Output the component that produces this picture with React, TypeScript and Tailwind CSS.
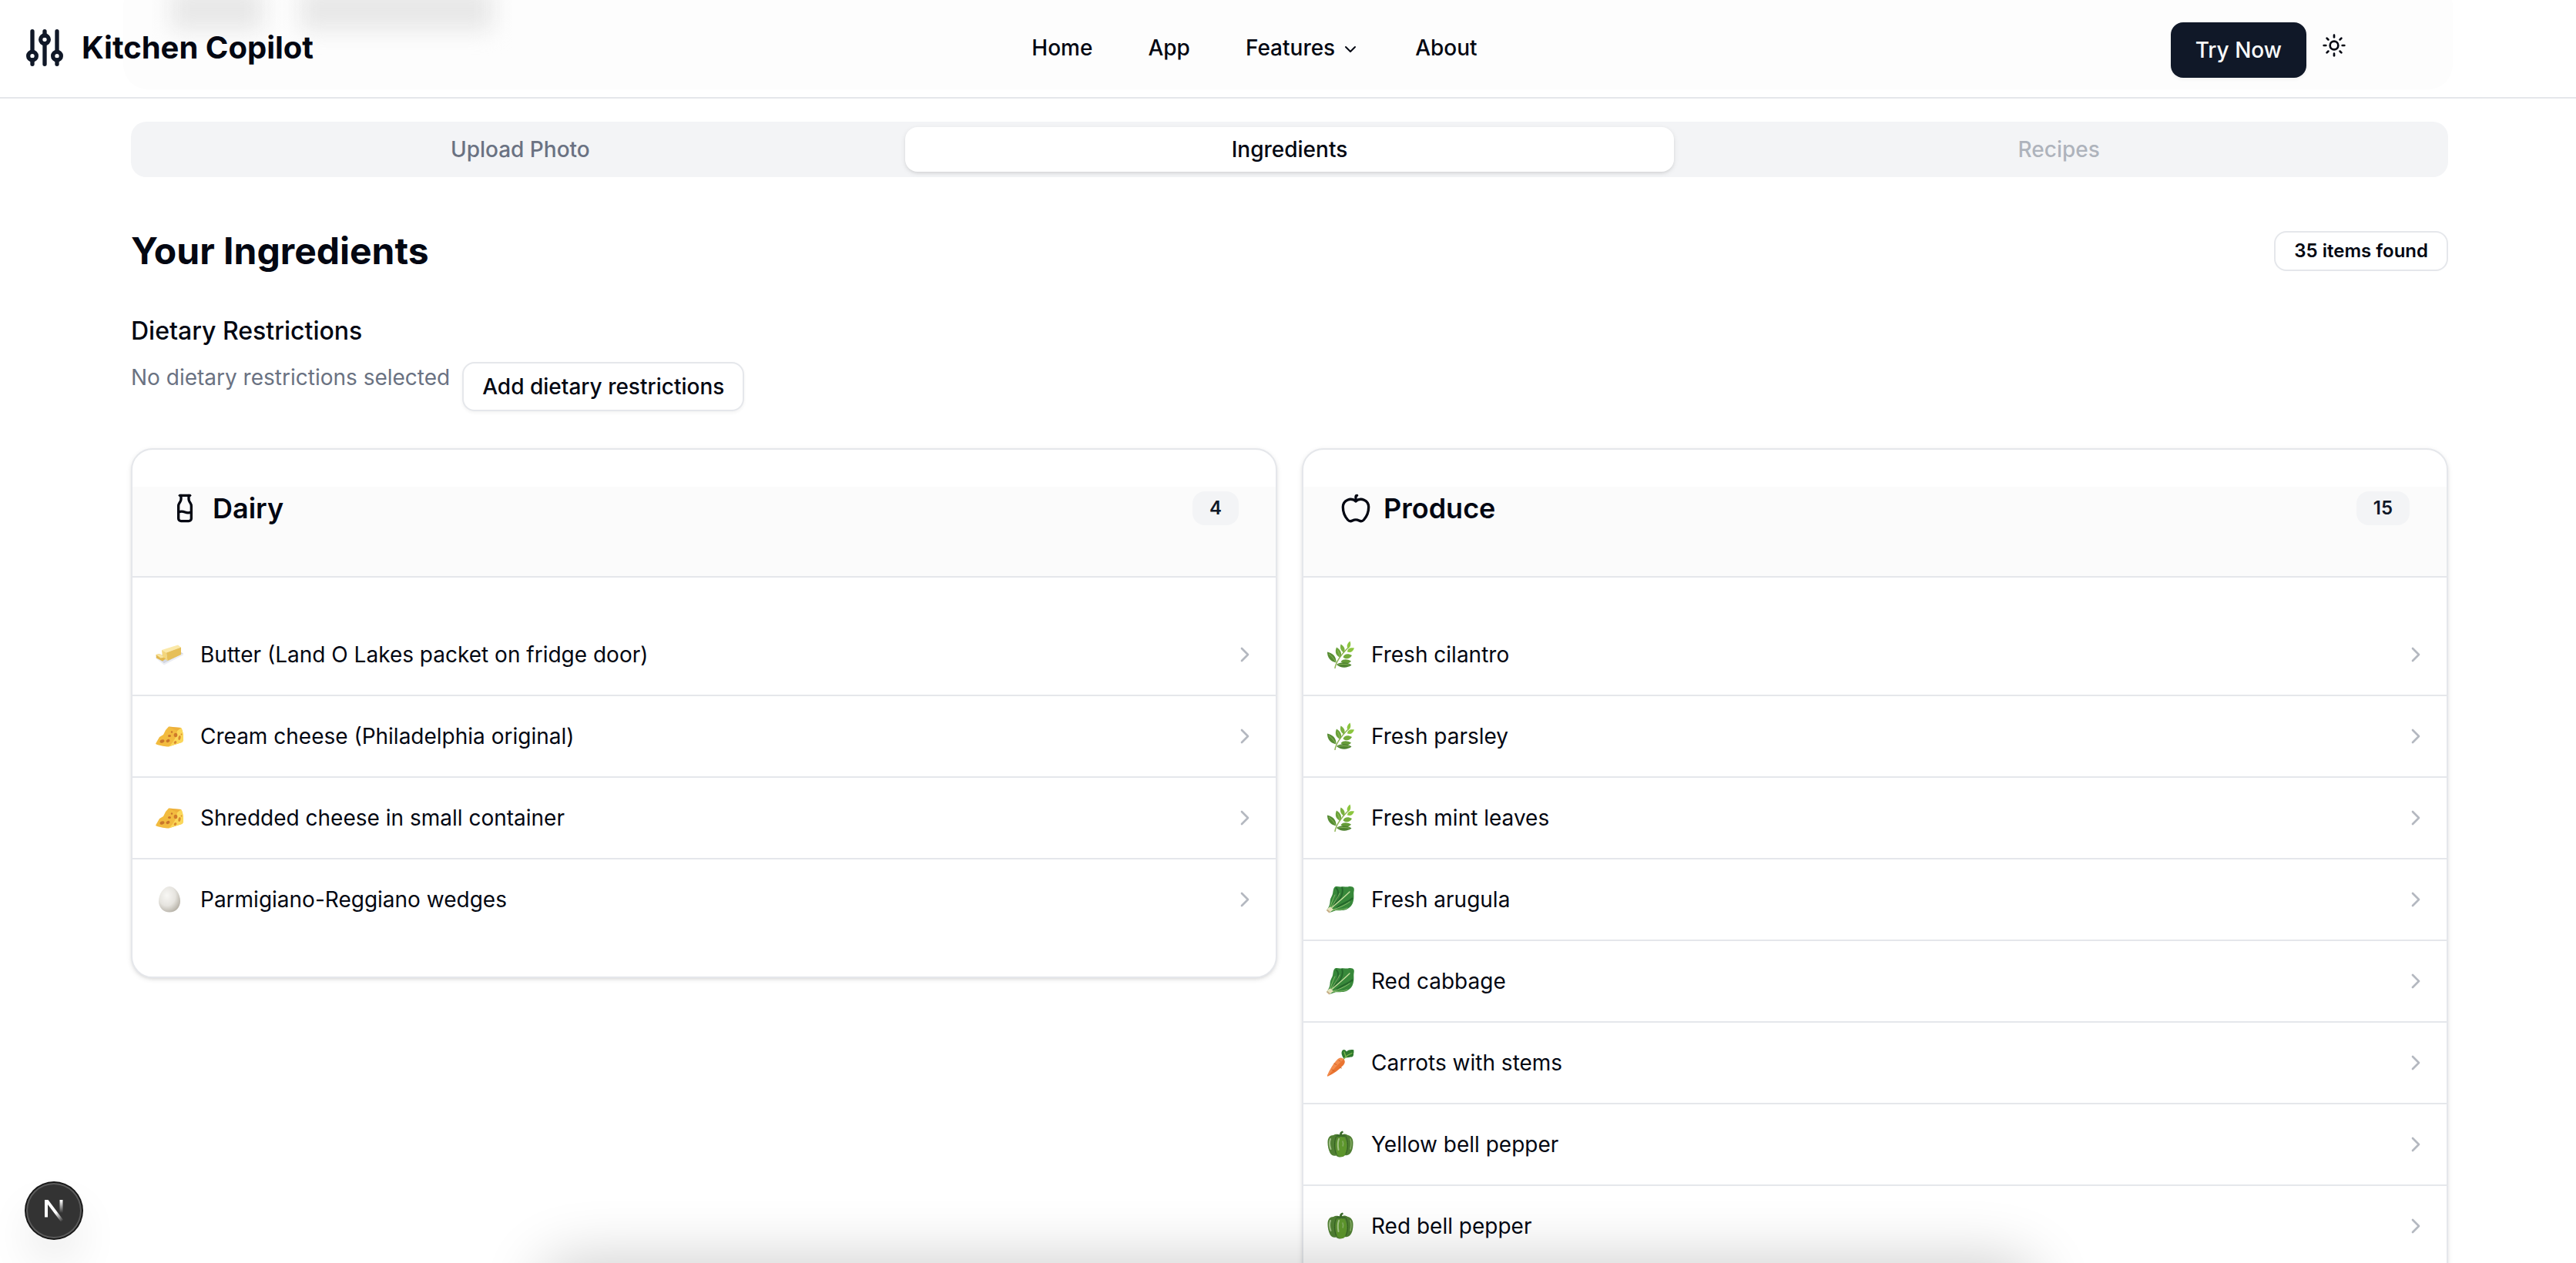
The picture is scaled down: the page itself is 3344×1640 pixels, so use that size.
import React from "react";
import { Apple, ChevronDown, ChevronRight, Milk, Sun } from "lucide-react";

function LogoIcon() {
  return (
    <svg viewBox="0 0 24 24" className="size-16 shrink-0 text-gray-900" fill="none" stroke="currentColor" strokeWidth="2" strokeLinecap="round" strokeLinejoin="round" aria-hidden="true">
      <circle cx="6" cy="16" r="2" />
      <path d="M6 4v10M6 18v2" />
      <circle cx="12" cy="8" r="2" />
      <path d="M12 4v2M12 10v10" />
      <circle cx="18" cy="16" r="2" />
      <path d="M18 4v10M18 18v2" />
    </svg>
  );
}

function ButterIcon() {
  return (
    <svg viewBox="0 0 36 36" className="size-9" aria-hidden="true">
      <path d="M0 21 27 12l9 4.500L11 29.500z" fill="#d3d7e2" />
      <path d="M0 21v1.500L11 31.500l25-13v-2L11 29.500z" fill="#eceef3" />
      <path d="M8 12 29 5.500l4 3L14 15.500z" fill="#fbe9a9" />
      <path d="m14 15.500 19-7v9.500L15.500 26z" fill="#e6bf58" />
      <path d="m8 12 6 3.500 1.500 10.500L9 22z" fill="#f3d67c" />
      <path d="m.5 18 5-1 7.500 6.500-4 3-8-4z" fill="#e3b84f" />
      <path d="m.5 18 5-1 5.500 4.500-4.500 1z" fill="#f9e5a0" />
    </svg>
  );
}

function CheeseIcon() {
  return (
    <svg viewBox="0 0 36 36" className="size-9" aria-hidden="true">
      <path d="M17 5.500 33 7c2 3 3 8 3 13.500 0 3-.5 5-2 5.500l-17 5.500c-2 .5-10-1-16-3-.8-.3-1-.8-.6-1.500L5 19l5-3 3-6z" fill="#f2bb3f" />
      <path d="M33 7c2 3 3 8 3 13.500 0 3-.5 5-2 5.500l-17 5.500c7-6 10.500-14 11-20.500z" fill="#fbd85a" />
      <path d="M17 5.500 33 7l-5 4z" fill="#e9a636" opacity=".5" />
      <ellipse cx="8.500" cy="24.500" rx="3" ry="2" transform="rotate(-20 8.500 24.500)" fill="#c9762a" />
      <ellipse cx="16" cy="24" rx="2.600" ry="1.900" transform="rotate(-25 16 24)" fill="#c9762a" />
      <ellipse cx="18" cy="17.500" rx="2" ry="1.500" fill="#c9762a" />
      <circle cx="21" cy="12.500" r="1.200" fill="#c9762a" />
      <ellipse cx="26" cy="16.500" rx="2.300" ry="2.800" fill="#cf7a2b" />
      <ellipse cx="31" cy="20" rx="1.600" ry="3" transform="rotate(12 31 20)" fill="#d98a30" />
      <ellipse cx="25.500" cy="26" rx="2" ry="1.600" transform="rotate(-40 25.500 26)" fill="#d98a30" />
      <circle cx="33.500" cy="15.500" r=".9" fill="#d98a30" />
    </svg>
  );
}

function EggIcon() {
  return (
    <svg viewBox="0 0 36 36" className="size-9" aria-hidden="true">
      <defs>
        <radialGradient id="egg-shell" cx="38%" cy="35%" r="72%">
          <stop offset="0" stopColor="#f8f7f4" />
          <stop offset=".55" stopColor="#e6e4df" />
          <stop offset="1" stopColor="#b3aea3" />
        </radialGradient>
      </defs>
      <path d="M18 1c7.500 0 14 10 14 19 0 8.500-6 14.500-14 14.500S4 28.500 4 20C4 11 10.500 1 18 1Z" fill="url(#egg-shell)" />
    </svg>
  );
}

function HerbIcon() {
  return (
    <svg viewBox="0 0 36 36" className="size-9" aria-hidden="true">
      <path d="M11 35.500C12 28 17 20 29 8" stroke="#8fb455" strokeWidth="1.500" fill="none" strokeLinecap="round" />
      <path d="M28 10c-3-3-.5-7 2.500-9.500 1.500 4 1 7.500-2.500 9.500Z" fill="#8cc63f" />
      <path d="M22.500 15.500c-5-3-5-7.500-4-11 4.500 2.500 6.500 6.500 4 11Z" fill="#79b03f" />
      <path d="M17.500 22C11 18.500 11 13 13 8.500c5 3 8 8 4.500 13.500Z" fill="#6aa23a" />
      <path d="M12.500 28.500C4 26.500 1 21 1 14.500c7 1.500 12 6 11.500 14Z" fill="#568c33" />
      <path d="M27 14.500c0-5 4.500-6 9-5-1.500 4.500-4.500 6.500-9 5Z" fill="#8cc63f" />
      <path d="M21.500 21.500c1.500-5 7-5 11.500-2.500-3 5-7.500 5.500-11.500 2.500Z" fill="#74ab3c" />
      <path d="M18.500 27c3.500-4 9-3 13.500-.5-3.500 4-9.500 4.500-13.500.5Z" fill="#659c38" />
      <path d="M13 31c4.500-4 14-3.500 19.500.5-5.500 4.500-15 4-19.500-.5Z" fill="#4f8330" />
      <path d="M3 17c4 3 7 7 9 11M14.500 12.500c1.500 3 2.500 6 2.500 9M15 31c5-.8 10-.6 15 .3" stroke="#9cc86a" strokeWidth=".7" fill="none" />
    </svg>
  );
}

function LeafyIcon() {
  return (
    <svg viewBox="0 0 36 36" className="size-9" aria-hidden="true">
      <path d="M11 1.500c3-1 5 .3 7.500 0 4-1 7 .5 10-.2 3-.6 6 0 7 2 .8 2.500-.3 4-.2 7 .1 4 .3 7-.8 10.700-.8 4-3.500 7-7 9-4.500 2.800-10.500 2-15.500 2.300L4 35 0 32c1.500-2 4-5 4.500-10.500 0-4 1.500-6 3-9.500s.5-8 3.500-10.500Z" fill="#37883a" />
      <path d="M12 3c5 3 4 13-3 22M20 2c3 8-2 16-10 24M34 16c-6 6-14 7-21 13" stroke="#1b5623" strokeWidth="2" fill="none" opacity=".65" />
      <path d="M3 32.500C9 26 20 18 30 8" stroke="#c9e0a0" strokeWidth="1.300" fill="none" strokeLinecap="round" />
      <path d="M4 30c2-6 4-12 7-18M5 30c5-8 9-13 12-20M6 32c8-3 16-5 24-11M8 32c7-1.500 13 0 19-3" stroke="#9cc877" strokeWidth=".8" fill="none" strokeLinecap="round" />
      <path d="M0 32c1-2.500 3.500-4 5-4.500l4 3.500L3.500 35.500z" fill="#e6e3bd" />
      <path d="m0 32 3.500 3.500 1-1.800-3-2.700z" fill="#c8a986" />
    </svg>
  );
}

function CarrotIcon() {
  return (
    <svg viewBox="0 0 36 36" className="size-9" aria-hidden="true">
      <path d="M22 12C19.500 8 18.500 4 21 1.500c2-1.500 4 0 5 2 2.500-2.500 6.500-3 9.500-2-.5 1.500.5 3-.5 4.500.5 2.500-1 5-3.500 4.500-3 1-6 .5-9.500 1.500Z" fill="#2f7a2e" />
      <path d="m21.500 14 5.500-5.500 6-3M25 10l-2-6" stroke="#7fb84c" strokeWidth="1.300" fill="none" strokeLinecap="round" />
      <path d="M14.500 13.500c2.500-2.500 6-2 8 0 2 2.200 1.500 5-.5 7.500C16 27 9 32.500 2 35.500c-.8.300-1.300-.2-1-1C4 27 9.500 18.500 14.500 13.500Z" fill="#ea7430" />
      <path d="M14.500 13.500c2.500-2.500 6-2 8 0C15.500 19 8 28 1.500 35.500 0 35.500 1 34.500 1 34.500 4 27 9.500 18.500 14.500 13.500Z" fill="#f5975a" opacity=".7" />
      <path d="m10 19 3 1.500M17 24l2.500 1M7 27l3 1.500M16 15l2 1" stroke="#c95a1d" strokeWidth=".8" strokeLinecap="round" />
    </svg>
  );
}

function PepperIcon() {
  return (
    <svg viewBox="0 0 36 36" className="size-9" aria-hidden="true">
      <path d="M9 6c3-2 6-1 8.500 0C21 4 25 4 27.500 6c4 .5 7 4 7 9.500 0 6-1 12-4.500 15-2 1.600-4 2-6 1.500-2 3-9 3.500-11.500.5C9 33.500 6 32 4.500 29 2.500 25 1.500 20 1.500 15.500 1.500 9 4.500 6 9 6Z" fill="#507f33" />
      <path d="M17 7c-5 3-6 15-3 24 2 4 8 4 10 .5C27.500 24 27 12 22 7c-2-1-4-1-5 0Z" fill="#5d962c" />
      <path d="M12.500 8c-2.500 5-3 15 0 22.500M25 7.500c3.500 6 3.500 16 0 23" stroke="#33611f" strokeWidth="1" fill="none" />
      <path d="M5 11c-1.500 4-1 9 .5 13M16 11c-1.500 4-1.500 9-.5 14" stroke="#a3c189" strokeWidth="2" fill="none" strokeLinecap="round" />
      <path d="M31 11c1.500 4 1 9 0 13M21 14c.8 2 .8 4 .2 6" stroke="#87ae66" strokeWidth="1.500" fill="none" strokeLinecap="round" />
      <path d="M12 7c3 1.500 5 1.800 7 1 2 .8 5 .3 7-1-2-1.500-4-1.500-6-1C20 4 20 3 22 2.500L21 .5c-3 .5-4 2.500-4 5-2-.5-4 0-5 1.500Z" fill="#3b6b2a" />
    </svg>
  );
}

type Item = { name: string; icon: () => React.JSX.Element };

const dairy: Item[] = [
  { name: "Butter (Land O Lakes packet on fridge door)", icon: ButterIcon },
  { name: "Cream cheese (Philadelphia original)", icon: CheeseIcon },
  { name: "Shredded cheese in small container", icon: CheeseIcon },
  { name: "Parmigiano-Reggiano wedges", icon: EggIcon },
];

const produce: Item[] = [
  { name: "Fresh cilantro", icon: HerbIcon },
  { name: "Fresh parsley", icon: HerbIcon },
  { name: "Fresh mint leaves", icon: HerbIcon },
  { name: "Fresh arugula", icon: LeafyIcon },
  { name: "Red cabbage", icon: LeafyIcon },
  { name: "Carrots with stems", icon: CarrotIcon },
  { name: "Yellow bell pepper", icon: PepperIcon },
  { name: "Red bell pepper", icon: PepperIcon },
];

function CategoryCard({ title, count, icon, items }: { title: string; count: number; icon: React.ReactNode; items: Item[] }) {
  return (
    <section className="flex flex-col gap-12 self-start rounded-[28px] border-2 border-gray-200 bg-white py-12 shadow-[0_2px_6px_rgba(0,0,0,0.1),0_2px_4px_-2px_rgba(0,0,0,0.1)]">
      <div className="border-b-2 border-gray-200 bg-[#fbfbfb] px-12 pb-[60px]">
        <div className="flex items-center justify-between">
          <h2 className="flex items-center gap-4 text-[36px] leading-[56px] font-semibold">
            {icon}
            {title}
          </h2>
          <span className="rounded-2xl bg-gray-100 px-[22px] py-1.5 text-[24px] leading-[32px] font-semibold text-gray-900">{count}</span>
        </div>
      </div>
      <ul className="divide-y-2 divide-gray-200">
        {items.map(({ name, icon: Icon }) => (
          <li key={name}>
            <button type="button" className="flex h-[104px] w-full items-center pr-6 pl-[30px] text-left">
              <Icon />
              <span className="ml-[22px] flex-1 text-[28px] leading-[40px]">{name}</span>
              <ChevronRight className="size-8 text-gray-500/50" />
            </button>
          </li>
        ))}
      </ul>
    </section>
  );
}

export default function App() {
  return (
    <div className="relative h-screen overflow-hidden bg-white font-['Inter',sans-serif] text-gray-950">
      <header className="relative grid h-32 grid-cols-[1fr_auto_1fr] items-center overflow-hidden border-b-2 border-gray-200 bg-white pr-[113px] pb-0.5 pl-[26px]">
        <div className="absolute inset-x-40 -top-6 bottom-2.5 rounded-[32px] bg-[#fdfdfd]" aria-hidden="true" />
        <div className="absolute -top-4 left-[222px] flex gap-12 blur-[14px]" aria-hidden="true">
          <span className="h-14 w-[120px] bg-[#e8e8e8]" />
          <span className="h-14 w-[250px] bg-[#e8e8e8]" />
        </div>

        <a href="#home" className="relative flex items-center gap-4 text-[40px] leading-[56px] font-bold">
          <LogoIcon />
          Kitchen Copilot
        </a>

        <nav aria-label="Main" className="relative flex items-center gap-2 text-[28px] leading-[40px] font-medium">
          <a href="#home" className="px-8 py-4">Home</a>
          <a href="#app" className="px-8 py-4">App</a>
          <button type="button" className="flex items-center gap-2 px-8 py-4">
            Features
            <ChevronDown className="mt-1 size-6" />
          </button>
          <a href="#about" className="px-8 py-4">About</a>
        </nav>

        <div className="relative flex items-center justify-end gap-5 pr-[185px]">
          <button type="button" className="mt-1.5 h-[72px] rounded-2xl bg-gray-900 px-8 text-[28px] leading-[40px] font-medium text-gray-50 shadow-[0_2px_4px_rgba(0,0,0,0.05)]">
            Try Now
          </button>
          <button type="button" aria-label="Toggle theme" className="mb-1.5">
            <Sun className="size-8" />
          </button>
        </div>
      </header>

      <div className="pl-1">
        <main className="mx-auto max-w-[3072px] px-8 pt-[30px]">
          <div role="tablist" className="grid h-[72px] grid-cols-3 items-center rounded-[20px] bg-gray-100 px-1.5 text-[28px] leading-[40px] font-medium">
            <button type="button" role="tab" aria-selected="false" className="h-[58px] text-gray-500">Upload Photo</button>
            <button type="button" role="tab" aria-selected="true" className="h-[58px] rounded-2xl bg-white shadow-[0_2px_6px_rgba(0,0,0,0.1),0_2px_4px_-2px_rgba(0,0,0,0.1)]">Ingredients</button>
            <button type="button" role="tab" aria-selected="false" disabled className="h-[58px] text-gray-500/50">Recipes</button>
          </div>

          <div className="mt-16 flex items-center justify-between">
            <h1 className="text-[48px] leading-[64px] font-bold">Your Ingredients</h1>
            <span className="rounded-2xl border-2 border-gray-200 px-6 py-2 text-[24px] leading-[32px] font-semibold">35 items found</span>
          </div>

          <h2 className="mt-12 text-[32px] leading-[48px] font-medium">Dietary Restrictions</h2>
          <div className="mt-4 flex items-start gap-4">
            <p className="text-[28px] leading-[40px] text-gray-500">No dietary restrictions selected</p>
            <button type="button" className="h-16 rounded-2xl border-2 border-gray-200 bg-white px-6 text-[28px] leading-[40px] font-medium shadow-[0_2px_4px_rgba(0,0,0,0.05)]">
              Add dietary restrictions
            </button>
          </div>

          <div className="mt-12 grid grid-cols-2 gap-8">
            <CategoryCard title="Dairy" count={4} icon={<Milk className="size-10" />} items={dairy} />
            <CategoryCard title="Produce" count={15} icon={<Apple className="size-10" />} items={produce} />
          </div>
        </main>
      </div>

      <div className="pointer-events-none absolute inset-x-[704px] top-full h-20 rounded-[40px] shadow-[0_0_80px_4px_rgba(0,0,0,0.2)]" aria-hidden="true" />

      <button
        type="button"
        aria-label="Open Next.js Dev Tools"
        className="absolute bottom-8 left-[34px] flex size-[72px] items-center justify-center rounded-full bg-[#333] shadow-[0_0_0_2px_#171717,inset_0_0_0_2px_rgba(255,255,255,0.2),0_32px_64px_-16px_rgba(0,0,0,0.24)]"
      >
        <svg viewBox="0 0 26 28" className="h-7 w-[26px]" fill="none" aria-hidden="true">
          <defs>
            <linearGradient id="n-diagonal" x1="15" y1="17" x2="24" y2="28" gradientUnits="userSpaceOnUse">
              <stop stopColor="#fff" />
              <stop offset="1" stopColor="#fff" stopOpacity="0" />
            </linearGradient>
            <linearGradient id="n-stem" x1="22" y1="1" x2="22" y2="17" gradientUnits="userSpaceOnUse">
              <stop stopColor="#fff" />
              <stop offset="1" stopColor="#fff" stopOpacity="0" />
            </linearGradient>
          </defs>
          <path d="M1 0h4.500L25 26l-3 2.500L5 6v16.500H1z" fill="url(#n-diagonal)" />
          <path d="M20.500 0h4v17h-4z" fill="url(#n-stem)" />
        </svg>
      </button>
    </div>
  );
}
